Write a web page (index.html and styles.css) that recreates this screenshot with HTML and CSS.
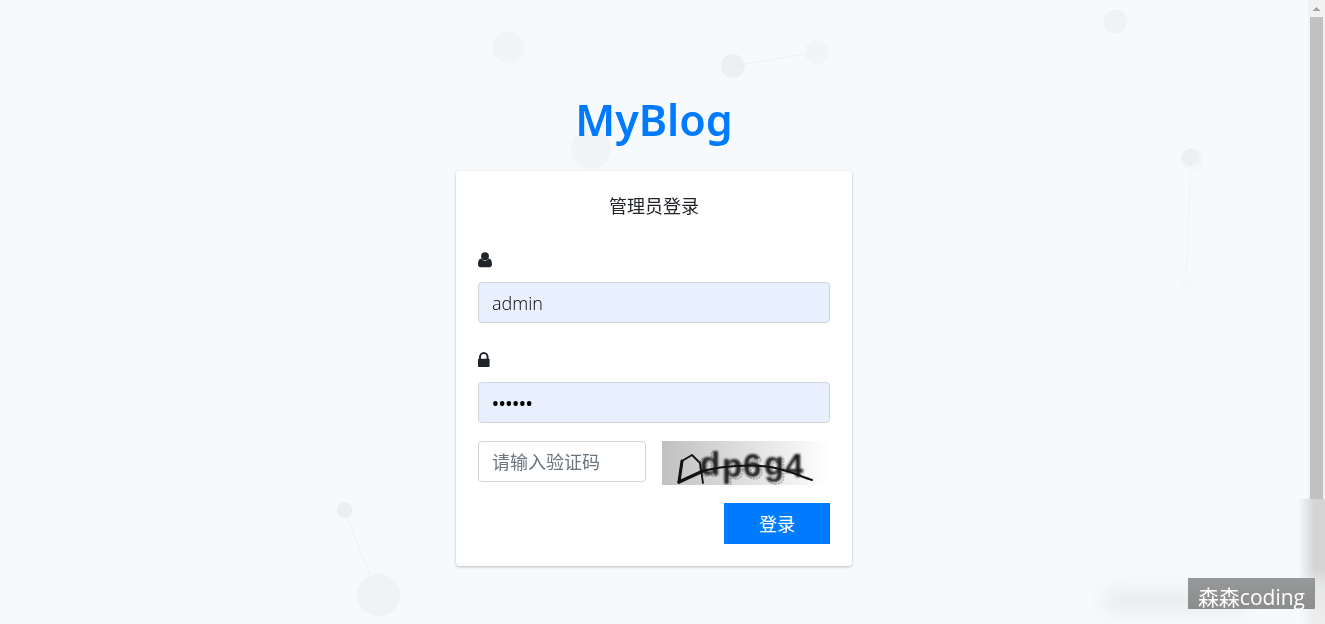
FILE: index.html
```html
<!DOCTYPE html>
<html lang="zh-CN">
<head>
<meta charset="utf-8">
<meta name="viewport" content="width=device-width, initial-scale=1">
<title>MyBlog</title>
<link rel="stylesheet" href="styles.css">
</head>
<body class="page">
<svg class="particles" viewBox="0 0 1325 624" preserveAspectRatio="xMidYMid slice" aria-hidden="true">
  <g stroke-width="1">
    <path d="M508 47L591 149" stroke="#f3f5f6"/>
    <path d="M591 149L594 172" stroke="#f0f2f4"/>
    <path d="M733 66L817 52" stroke="#eef0f1"/>
    <path d="M1116 22L1191 158" stroke="#f5f8fa"/>
    <path d="M1191 157L1186 283" stroke="#f0f3f4"/>
    <path d="M344 510L378 595" stroke="#eef0f1"/>
  </g>
  <g fill="#f3f4f5">
    <circle cx="508.500" cy="47.500" r="16"/>
    <circle cx="591" cy="149" r="20"/>
    <circle cx="732.700" cy="66" r="12" fill="#eeeff0"/>
    <circle cx="816.700" cy="52" r="12"/>
    <circle cx="1115.500" cy="21.500" r="12" fill="#f1f2f3"/>
    <circle cx="1191.500" cy="159" r="11" fill="#f3f5f6"/>
    <circle cx="1190.700" cy="157.300" r="8.500" fill="#edeff0"/>
    <circle cx="1186.500" cy="282.500" r="6.500" fill="#f4f8f9"/>
    <circle cx="344.500" cy="510" r="8" fill="#edeeef"/>
    <circle cx="378.500" cy="595" r="21.500" fill="#f1f2f3"/>
    <ellipse cx="1223.500" cy="547" rx="13" ry="10" fill="#f6f8f9"/>
    <circle cx="1021" cy="420" r="3" fill="#f6f9fb"/>
  </g>
  <g stroke="#e9ebec">
    <path d="M733 66L744 64M344 510L347 517M1191 157L1190.600 166"/>
  </g>
</svg>

<main class="login">
  <h1 class="brand">MyBlog</h1>
  <form class="card">
    <h2 class="card-title">管理员登录</h2>
    <div class="field">
      <label class="field-label" for="username" aria-label="用户名">
        <svg class="icon" viewBox="0 0 16 16" aria-hidden="true"><circle cx="7" cy="4.200" r="3.900"/><path d="M3.200 6.500C1 6.800 0 9 0 12.300C0 14 .9 15.200 2.500 15.200H11.500C13.100 15.200 14 14 14 12.300C14 9 13 6.800 10.800 6.500C9.800 7.700 8.500 8.700 7 8.700S4.200 7.700 3.200 6.500Z"/></svg>
      </label>
      <input class="control filled" id="username" type="text" value="admin">
    </div>
    <div class="field">
      <label class="field-label" for="password" aria-label="密码">
        <svg class="icon" viewBox="0 0 16 16" aria-hidden="true"><path d="M2 7V5.200A3.800 4.200 0 0 1 9.600 5.200V7" fill="none" stroke="#212529" stroke-width="2"/><rect y="6.800" width="11.600" height="8.200" rx="1"/></svg>
      </label>
      <input class="control filled secret" id="password" type="password" value="abcdef">
    </div>
    <div class="verify">
      <input class="control" type="text" placeholder="请输入验证码" aria-label="请输入验证码">
      <svg class="captcha" viewBox="0 0 168 44" preserveAspectRatio="none" role="img" aria-label="验证码">
        <defs>
          <linearGradient id="fade"><stop offset="0" stop-color="#c0c0c0"/><stop offset="1" stop-color="#fff"/></linearGradient>
          <filter id="soft" x="-10%" y="-20%" width="120%" height="140%"><feGaussianBlur stdDeviation=".8"/></filter>
        </defs>
        <rect width="168" height="44" fill="url(#fade)"/>
        <g class="captcha-text" filter="url(#soft)">
          <text x="38" y="34">d</text><text x="60" y="36">p</text><text x="81" y="36">6</text><text x="102" y="34">g</text><text x="123" y="36">4</text>
        </g>
        <g class="captcha-echo">
          <text x="36" y="35">d</text><text x="62" y="38">p</text><text x="83" y="38">6</text><text x="104" y="36">g</text>
        </g>
        <g fill="none" stroke="#111" stroke-linecap="round" stroke-linejoin="round">
          <path d="M17 41L20 20L30 14L38 22L41 42" stroke-width="1.800"/>
          <path d="M17 41L20 20" stroke-width="3"/>
          <path d="M17 41L41 30" stroke-width="3.500"/>
          <path d="M41 30C60 25 88 23 108 26S139 36 150 39" stroke-width="2"/>
        </g>
      </svg>
    </div>
    <button class="submit" type="submit">登录</button>
  </form>
</main>

<div class="scrollbar" aria-hidden="true">
  <svg class="arrow" viewBox="0 0 17 17"><path d="M5 11V10H6V9H7V8H8V7H9V8H10V9H11V10H12V11Z" fill="#a3a3a3"/></svg>
  <div class="thumb"></div>
  <div class="smudge"></div>
</div>
<div class="haze" aria-hidden="true"></div>
<div class="watermark">森森coding</div>
</body>
</html>
```

FILE: styles.css
```css
* { box-sizing: border-box; }

.page {
  margin: 0;
  min-height: 100vh;
  display: grid;
  grid-template-columns: 1fr 17px;
  background: #f7fafd;
  color: #212529;
  font-family: "Open Sans", "Noto Sans CJK SC", sans-serif;
  font-size: 18px;
  overflow: hidden;
}

.particles {
  position: fixed;
  inset: 0;
  width: 100%;
  height: 100%;
  z-index: -1;
}

.login {
  display: flex;
  flex-direction: column;
  align-items: center;
  padding: 93px 16px 40px;
}

.brand {
  margin: 0 0 25px;
  color: #007bff;
  font-family: "Noto Sans", "Open Sans", sans-serif;
  font-size: 43px;
  font-weight: 600;
  line-height: 53px;
}

.card {
  display: flex;
  flex-direction: column;
  width: 100%;
  max-width: 396px;
  padding: 22px;
  border-radius: 4px;
  background: #fff;
  box-shadow: 0 1px 3px rgba(0, 0, 0, .25);
}

.card-title {
  margin: 0 0 29px;
  font-size: 18px;
  font-weight: 400;
  line-height: 26px;
  text-align: center;
}

.field { margin-bottom: 25px; }
.field:nth-of-type(2) { margin-bottom: 18px; }

.field-label {
  display: flex;
  align-items: center;
  height: 24px;
  margin-bottom: 10px;
}

.icon {
  width: 16px;
  height: 16px;
  fill: #212529;
}

.control {
  display: block;
  width: 100%;
  min-width: 0;
  height: 41px;
  padding: 7px 13px;
  border: 1px solid #ced4da;
  border-radius: 4px;
  background: #fff;
  color: #000;
  font-family: inherit;
  font-size: 18px;
  font-weight: 300;
  line-height: 25px;
}

.control::placeholder {
  color: #6c757d;
  font-weight: 400;
  opacity: 1;
}

.filled { background: #e8f0fe; }
.secret { font-weight: 600; }

.verify {
  display: grid;
  grid-template-columns: 1fr 1fr;
  gap: 16px;
  margin-bottom: 18px;
}

.captcha {
  display: block;
  width: 100%;
  height: 44px;
}

.captcha-text,
.captcha-echo {
  fill: #1a1a1a;
  font-family: "Liberation Sans", Arial, sans-serif;
  font-size: 33px;
  font-weight: 700;
}

.captcha-echo {
  fill: none;
  stroke: #444;
  stroke-width: 1px;
  stroke-dasharray: 2 1;
  opacity: .5;
}

.submit {
  align-self: flex-end;
  width: 106px;
  height: 41px;
  padding: 0 0 2px;
  border: 0;
  background: #007bff;
  color: #fff;
  font-family: inherit;
  font-size: 18px;
  font-weight: 400;
}

.scrollbar {
  display: flex;
  flex-direction: column;
  height: 100vh;
  background: #f1f1f1;
}

.arrow { width: 17px; height: 17px; }

.thumb {
  flex: 482;
  margin: 0 2px;
  background: #c1c1c1;
}

.smudge {
  flex: 125;
  margin-left: -10px;
  background: linear-gradient(90deg, #f7fafd, transparent 60%), linear-gradient(#d4d4d4 55%, #e6e7e8 70%, #eee);
}

.haze {
  position: fixed;
  right: 80px;
  bottom: 12px;
  width: 140px;
  height: 22px;
  background: #e9ebec;
  filter: blur(9px);
}

.watermark {
  position: fixed;
  right: 10px;
  bottom: 15px;
  padding: 7px 10px 0;
  background: linear-gradient(#979899, #8c8d8d);
  color: #fff;
  font-family: "Open Sans", "Noto Sans CJK SC", sans-serif;
  font-size: 21px;
  line-height: 24px;
  white-space: nowrap;
}
```
